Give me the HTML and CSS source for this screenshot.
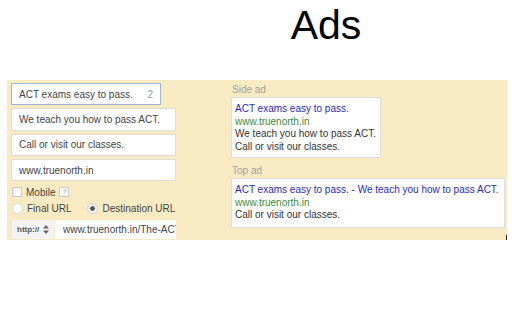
FILE: index.html
```html
<!DOCTYPE html>
<html lang="en">
<head>
  <meta charset="UTF-8">
  <title>Ads</title>
  <link rel="stylesheet" href="styles.css">
</head>
<body>

<h1 class="title">Ads</h1>

<div class="panel">
  <div class="editor">
    <div class="field field-short">
      <input type="text" value="ACT exams easy to pass.">
      <span class="count">2</span>
    </div>
    <div class="field">
      <input type="text" value="We teach you how to pass ACT.">
    </div>
    <div class="field">
      <input type="text" value="Call or visit our classes.">
    </div>
    <div class="field">
      <input type="text" value="www.truenorth.in">
    </div>

    <div class="row mobile-row">
      <span class="check"></span>
      <span>Mobile</span>
      <span class="help">?</span>
    </div>

    <div class="row radio-row">
      <span class="radio"></span>
      <span>Final URL</span>
      <span class="radio radio-on"></span>
      <span>Destination URL</span>
    </div>

    <div class="url-row">
      <div class="proto">http://
        <svg width="6" height="9" viewBox="0 0 6 9">
          <path d="M3 0 L6 3.5 H0 Z M0 5.5 H6 L3 9 Z" fill="#666"/>
        </svg>
      </div>
      <input type="text" class="url-input" value="www.truenorth.in/The-ACT">
    </div>
  </div>

  <div class="previews">
    <div class="preview-label">Side ad</div>
    <div class="ad side-ad">
      <div class="ad-head">ACT exams easy to pass.</div>
      <div class="ad-url">www.truenorth.in</div>
      <div class="ad-text">We teach you how to pass ACT.</div>
      <div class="ad-text">Call or visit our classes.</div>
    </div>

    <div class="preview-label top-label">Top ad</div>
    <div class="ad top-ad">
      <div class="ad-head">ACT exams easy to pass. - We teach you how to pass ACT.</div>
      <div class="ad-url">www.truenorth.in</div>
      <div class="ad-text">Call or visit our classes.</div>
    </div>
  </div>

  <span class="tick"></span>
</div>

</body>
</html>
```

FILE: styles.css
```css
body {
  margin: 0;
  font-family: "Liberation Sans", Arial, sans-serif;
  background-color: white;
  color: #333;
}

.title {
  margin: 5px 0 0;
  padding-left: 128px;
  height: 40px;
  line-height: 40px;
  font-size: 41px;
  font-weight: normal;
  text-align: center;
  color: black;
}

.panel {
  position: relative;
  box-sizing: border-box;
  width: 500px;
  height: 160px;
  margin: 35px 0 0 7px;
  padding: 3px 2px 1px 4px;
  background-color: #f8ebc3;
  display: flex;
  gap: 55px;
  font-size: 10px;
}

.editor {
  width: 165px;
  flex-shrink: 0;
  display: flex;
  flex-direction: column;
}

.field {
  box-sizing: border-box;
  height: 23px;
  margin-bottom: 3px;
  border: 1px solid #ddd;
  background-color: white;
  display: flex;
  align-items: center;
}

.field-short {
  width: 150px;
  border-color: #9fb5d6;
}

.field input, .url-input {
  flex: 1;
  min-width: 0;
  border: none;
  outline: none;
  padding: 0 0 0 7px;
  font-family: inherit;
  font-size: 10px;
  color: #444;
  background: transparent;
}

.count {
  color: #999;
  font-size: 10px;
  padding-right: 7px;
}

.row {
  display: flex;
  align-items: center;
  height: 12px;
  color: #444;
  margin-left: 1px;
  white-space: nowrap;
}

.row span {
  flex-shrink: 0;
}

.mobile-row {
  margin-top: 2px;
}

.radio-row {
  margin-top: 5px;
}

.check {
  box-sizing: border-box;
  width: 10px;
  height: 10px;
  border: 1px solid #c8c8c8;
  background-color: white;
  margin-right: 4px;
}

.help {
  box-sizing: border-box;
  width: 10px;
  height: 10px;
  margin-left: 4px;
  border: 1px solid #ccc;
  background-color: #fbfbfb;
  color: #999;
  font-size: 7px;
  line-height: 8px;
  text-align: center;
}

.radio {
  box-sizing: border-box;
  width: 11px;
  height: 11px;
  border-radius: 50%;
  border: 1px solid #d6d6d6;
  background-color: white;
  margin-right: 4px;
}

.radio-on {
  margin-left: 16px;
  background: radial-gradient(circle, #555 0 2px, #eee 2.5px);
}

.url-row {
  display: flex;
  height: 20px;
  margin-top: 5px;
  margin-left: 1px;
}

.proto {
  width: 42px;
  box-sizing: border-box;
  padding-left: 5px;
  background-color: #f3f3f3;
  display: flex;
  align-items: center;
  gap: 4px;
  font-size: 8px;
  font-weight: bold;
  color: #555;
}

.url-input {
  background-color: white;
  padding-left: 8px;
  margin-left: 1px;
}

.previews {
  display: flex;
  flex-direction: column;
  align-items: flex-start;
}

.preview-label {
  color: #a0a0a0;
  line-height: 12px;
  margin: 1px 0 1px 1px;
}

.top-label {
  margin-top: 7px;
}

.ad {
  box-sizing: border-box;
  background-color: white;
  border: 1px solid #ddd;
  padding: 5px 3px 4px 3px;
  line-height: 12.5px;
  white-space: nowrap;
}

.side-ad {
  width: 150px;
  height: 61px;
}

.top-ad {
  width: 274px;
  height: 50px;
}

.ad-head {
  color: #2a2ab4;
}

.ad-url {
  color: #3d8a3a;
}

.ad-text {
  color: #333;
}

.tick {
  position: absolute;
  right: 0;
  bottom: 0;
  width: 1px;
  height: 5px;
  background-color: #222;
}
```
